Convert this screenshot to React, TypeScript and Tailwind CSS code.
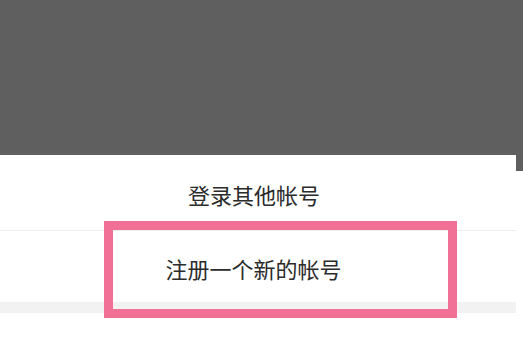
export default function App() {
  return (
    <div
      className="relative w-[523px] h-[339px] overflow-hidden bg-white"
      style={{ fontFamily: '"Noto Sans CJK SC", "Noto Sans", sans-serif' }}
    >
      {/* dimmed backdrop */}
      <div className="h-[155px] bg-[#5f5f5f]" />

      <div className="flex">
        {/* bottom sheet */}
        <div className="w-[516px] bg-white rounded-tr-[16px] flex flex-col">
          <div className="h-[75px] flex items-center justify-center pr-[8px] pt-[4px] text-[22px] text-[#2b2b2b]">
            登录其他帐号
          </div>
          <div className="h-px bg-[#ededed]" />
          <div className="h-[71px] flex items-center justify-center pr-[9px] pt-[4px] text-[22px] text-[#2b2b2b]">
            注册一个新的帐号
          </div>
          <div className="h-[11px] bg-[#f2f2f2]" />
          <div className="h-[26px] bg-white" />
        </div>
        <div className="flex-1 flex flex-col">
          <div className="h-[16px] bg-[#5f5f5f]" />
          <div className="flex-1 bg-white" />
        </div>
      </div>

      {/* annotation box */}
      <div className="absolute left-[104px] top-[221px] w-[353px] h-[97px] border-[9px] border-[#f07096]" />
    </div>
  )
}
